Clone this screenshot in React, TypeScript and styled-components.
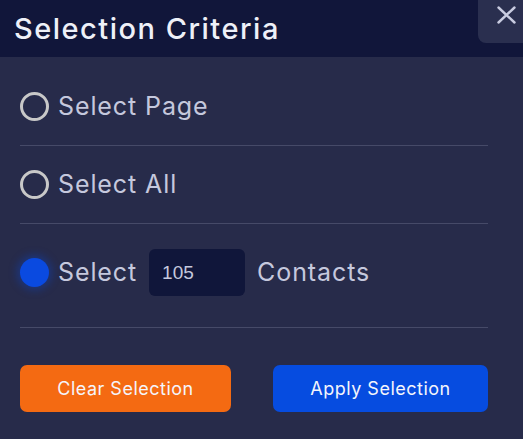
import * as React from "react";
import styled, { createGlobalStyle } from "styled-components";

const GlobalStyle = createGlobalStyle`
  html, body {
    margin: 0;
    padding: 0;
    background: #272b4a;
  }
  body {
    font-family: "Inter", "Open Sans", sans-serif;
  }
`;

const Panel = styled.div`
  width: 523px;
  height: 439px;
  background: #272b4a;
  display: flex;
  flex-direction: column;
`;

const Header = styled.header`
  height: 57px;
  background: #11163a;
  display: flex;
  align-items: center;
  padding-left: 14px;
  position: relative;
`;

const Title = styled.h1`
  margin: 0;
  font-size: 29px;
  font-weight: 500;
  color: #eef0f8;
  letter-spacing: 1.5px;
`;

const CloseButton = styled.button`
  position: absolute;
  top: 0;
  right: 0;
  width: 45px;
  height: 43px;
  border: none;
  background: #2a2f4f;
  border-bottom-left-radius: 8px;
  display: flex;
  align-items: flex-start;
  padding: 6px 0 0 19px;
  cursor: pointer;
`;

const Body = styled.div`
  padding: 11px 35px 0 20px;
  display: flex;
  flex-direction: column;
`;

const Row = styled.label<{ $pad: string }>`
  display: flex;
  align-items: center;
  padding: ${(p) => p.$pad};
  border-bottom: 1px solid #464a68;
  color: #c5c8dd;
  font-size: 25px;
  line-height: 29px;
  letter-spacing: 0.9px;
  gap: 9px;
  cursor: pointer;
`;

const Radio = styled.span<{ $checked?: boolean }>`
  width: 29px;
  height: 29px;
  box-sizing: border-box;
  border-radius: 50%;
  flex: none;
  border: ${(p) => (p.$checked ? "none" : "3px solid #c8c8c8")};
  background: ${(p) => (p.$checked ? "#0a4ae0" : "transparent")};
  box-shadow: ${(p) => (p.$checked ? "0 0 8px 3px rgba(10, 74, 224, 0.35)" : "none")};
`;

const CountInput = styled.input`
  width: 96px;
  height: 47px;
  box-sizing: border-box;
  border: none;
  border-radius: 6px;
  background: #10163a;
  color: #c5c8dd;
  font-family: "Liberation Sans", Arial, sans-serif;
  font-size: 19px;
  letter-spacing: 0;
  padding: 0 13px;
  margin: 0 3px;
  outline: none;
`;

const Actions = styled.div`
  display: flex;
  justify-content: space-between;
  margin-top: 37px;
`;

const ActionButton = styled.button<{ $tone: "clear" | "apply" }>`
  height: 47px;
  width: ${(p) => (p.$tone === "clear" ? "211px" : "215px")};
  border: none;
  border-radius: 7px;
  background: ${(p) => (p.$tone === "clear" ? "#f46a12" : "#064ce0")};
  color: #f4f5fb;
  font-family: inherit;
  font-size: 18px;
  letter-spacing: 0.5px;
  cursor: pointer;
`;

export default function App() {
  const [mode, setMode] = React.useState("count");
  const [count, setCount] = React.useState("105");

  return (
    <Panel>
      <GlobalStyle />
      <Header>
        <Title>Selection Criteria</Title>
        <CloseButton aria-label="Close">
          <svg width="19" height="18" viewBox="0 0 19 18">
            <path d="M1.5 1.5 L17.5 16.5 M17.5 1.5 L1.5 16.5" stroke="#c8cbe0" strokeWidth="2.4" strokeLinecap="round" />
          </svg>
        </CloseButton>
      </Header>
      <Body>
        <Row $pad="24px 0" onClick={() => setMode("page")}>
          <Radio $checked={mode === "page"} />
          Select Page
        </Row>
        <Row $pad="24px 0" onClick={() => setMode("all")}>
          <Radio $checked={mode === "all"} />
          Select All
        </Row>
        <Row $pad="25px 0 31px" onClick={() => setMode("count")}>
          <Radio $checked={mode === "count"} />
          Select
          <CountInput value={count} onChange={(e) => setCount(e.target.value)} />
          Contacts
        </Row>
        <Actions>
          <ActionButton $tone="clear" onClick={() => setMode("")}>Clear Selection</ActionButton>
          <ActionButton $tone="apply">Apply Selection</ActionButton>
        </Actions>
      </Body>
    </Panel>
  );
}
